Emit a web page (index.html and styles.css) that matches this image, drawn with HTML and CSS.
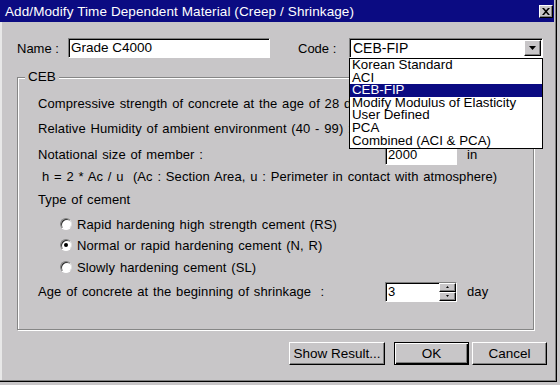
FILE: index.html
```html
<!DOCTYPE html>
<html>
<head>
<meta charset="utf-8">
<link rel="stylesheet" href="styles.css">
</head>
<body>
<div class="window">
  <div class="titlebar">
    <span class="title">Add/Modify Time Dependent Material (Creep / Shrinkage)</span>
    <span class="close"><svg width="8" height="7" viewBox="0 0 8 7"><path d="M0 0h2l2 2.2L6 0h2L5 3.5 8 7H6L4 4.8 2 7H0l3-3.5z" fill="#000"/></svg></span>
  </div>

  <div class="toprow">
    <span class="lbl-name">Name :</span>
    <span class="field name-field">Grade C4000</span>
    <span class="lbl-code">Code :</span>
    <div class="combo">
      <span class="combo-text">CEB-FIP</span>
      <span class="combo-btn"><svg width="7" height="4" viewBox="0 0 7 4"><path d="M0 0h7L3.5 4z" fill="#000"/></svg></span>
      <ul class="droplist">
        <li>Korean Standard</li>
        <li>ACI</li>
        <li class="sel">CEB-FIP</li>
        <li>Modify Modulus of Elasticity</li>
        <li>User Defined</li>
        <li>PCA</li>
        <li>Combined (ACI &amp; PCA)</li>
      </ul>
    </div>
  </div>

  <div class="group">
    <div class="legend">CEB</div>
    <div class="rows">
      <div class="row r1">
        <span class="rlabel">Compressive strength of concrete at the age of 28 days :</span>
        <span class="field num"></span>
      </div>
      <div class="row r2">
        <span class="rlabel">Relative Humidity of ambient environment (40 - 99) :</span>
        <span class="field num"></span>
      </div>
      <div class="row r3">
        <span class="rlabel">Notational size of member :</span>
        <span class="field num">2000</span><span class="unit">in</span>
      </div>
      <div class="row r4 formula">h = 2 * Ac / u&nbsp;&nbsp;(Ac : Section Area, u : Perimeter in contact with atmosphere)</div>
      <div class="row r5">Type of cement</div>
      <div class="row r6 radio-row"><span class="radio"></span><span>Rapid hardening high strength cement (RS)</span></div>
      <div class="row r7 radio-row"><span class="radio"><span class="dot"></span></span><span>Normal or rapid hardening cement (N, R)</span></div>
      <div class="row r8 radio-row"><span class="radio"></span><span>Slowly hardening cement (SL)</span></div>
      <div class="row r9">
        <span class="rlabel">Age of concrete at the beginning of shrinkage&nbsp; :</span>
        <span class="field num spin-field"><span class="spin-text">3</span>
          <span class="spin">
            <span class="spin-btn"><svg width="3" height="2" viewBox="0 0 3 2"><path d="M1.5 0L3 2H0z" fill="#000"/></svg></span>
            <span class="spin-btn"><svg width="3" height="2" viewBox="0 0 3 2"><path d="M0 0h3L1.5 2z" fill="#000"/></svg></span>
          </span>
        </span><span class="unit">day</span>
      </div>
    </div>
  </div>

  <div class="buttons">
    <span class="btn btn-show">Show Result...</span>
    <span class="btn btn-ok">OK</span>
    <span class="btn btn-cancel">Cancel</span>
  </div>
</div>
</body>
</html>
```

FILE: styles.css
```css
html, body {
  margin: 0;
  padding: 0;
  background: #c8c6c8;
}
body {
  width: 560px;
  height: 385px;
  overflow: hidden;
  font-family: "Liberation Sans", Arial, sans-serif;
  font-size: 13px;
  color: #000;
}
.window {
  width: 557px;
  height: 382px;
  box-sizing: border-box;
  background: #c8c6c8;
  box-shadow: inset -1px -1px 0 #000, inset -2px -2px 0 #808080, inset 2px 0 0 #e8e8e8;
  display: flex;
  flex-direction: column;
}
.titlebar {
  height: 22px;
  margin-right: 3px;
  background: #0b0b82;
  color: #fff;
  display: flex;
  align-items: center;
  justify-content: space-between;
}
.title {
  padding-left: 5px;
  font-size: 13.5px;
  letter-spacing: 0.1px;
}
.close {
  width: 14px;
  height: 13px;
  margin-right: 1px;
  background: #c8c6c8;
  box-sizing: border-box;
  border: 1px solid;
  border-color: #fff #000 #000 #fff;
  box-shadow: inset -1px -1px 0 #808080;
  display: flex;
  align-items: center;
  justify-content: center;
}
.toprow {
  margin-top: 16px;
  height: 20px;
  display: flex;
  align-items: center;
}
.lbl-name {
  margin-left: 17px;
  width: 51px;
}
.lbl-code {
  margin-left: 28px;
  width: 51px;
}
.field {
  box-sizing: border-box;
  height: 20px;
  background: #fff;
  border: 1px solid;
  border-color: #808080 #fff #fff #808080;
  box-shadow: inset 1px 1px 0 #000;
  display: flex;
  align-items: center;
  padding-left: 2px;
  line-height: 1;
}
.name-field {
  width: 202px;
  font-size: 13.5px;
}
.combo {
  position: relative;
  box-sizing: border-box;
  width: 194px;
  height: 20px;
  background: #fff;
  border: 1px solid;
  border-color: #808080 #fff #fff #808080;
  box-shadow: inset 1px 1px 0 #000;
  display: flex;
  align-items: center;
  justify-content: space-between;
}
.combo-text {
  padding-left: 3px;
  font-size: 14px;
}
.combo-btn {
  width: 17px;
  height: 16px;
  margin-right: 1px;
  box-sizing: border-box;
  background: #c8c6c8;
  border: 1px solid;
  border-color: #fff #000 #000 #fff;
  box-shadow: inset -1px -1px 0 #808080;
  display: flex;
  align-items: center;
  justify-content: center;
}
.droplist {
  position: absolute;
  top: 19px;
  left: -1px;
  width: 194px;
  box-sizing: border-box;
  margin: 0;
  padding: 0 0 1px 0;
  list-style: none;
  background: #fff;
  border: 1px solid #000;
  font-size: 13.3px;
  z-index: 5;
}
.droplist li {
  height: 12.6px;
  line-height: 12.6px;
  padding-left: 2px;
  white-space: nowrap;
}
.droplist li.sel {
  background: #0b0b82;
  color: #fff;
}
.group {
  margin-top: 19px;
  margin-left: 17px;
  width: 517px;
  height: 253px;
  box-sizing: border-box;
  border: 1px solid #868686;
  box-shadow: 1px 1px 0 #fff, inset 1px 1px 0 #fff;
}
.legend {
  margin-top: -8px;
  margin-left: 7px;
  width: fit-content;
  padding: 0 3px;
  height: 14px;
  line-height: 14px;
  background: #c8c6c8;
  font-size: 13.5px;
}
.rows {
  padding-top: 7px;
  padding-left: 20px;
  display: flex;
  flex-direction: column;
  letter-spacing: 0.1px;
  word-spacing: 1px;
}
.row {
  display: flex;
  align-items: center;
  white-space: nowrap;
}
.rlabel {
  width: 347px;
  flex: none;
}
.num {
  width: 72px;
}
.unit {
  margin-left: 10px;
}
.r1 { height: 25px; }
.r2 { height: 25px; }
.r3 { height: 27px; }
.r4 { height: 17px; }
.r5 { height: 29px; }
.r6 { height: 20px; }
.r7 { height: 22px; }
.r8 { height: 22px; }
.r9 { height: 27px; }
.formula {
  padding-left: 4px;
}
.radio-row {
  padding-left: 22px;
}
.radio {
  width: 12px;
  height: 12px;
  box-sizing: border-box;
  border-radius: 50%;
  border: 1px solid;
  border-color: #808080 #e0e0e0 #fff #808080;
  background: #fff;
  box-shadow: inset 1px 1px 0 #303030;
  margin-right: 5px;
  display: flex;
  align-items: center;
  justify-content: center;
}
.dot {
  width: 4px;
  height: 4px;
  border-radius: 50%;
  background: #000;
}
.spin-field {
  justify-content: space-between;
  padding-right: 0;
}
.spin {
  display: flex;
  flex-direction: column;
  height: 18px;
  width: 17px;
}
.spin-btn {
  flex: 1;
  box-sizing: border-box;
  background: #c8c6c8;
  border: 1px solid;
  border-color: #fff #000 #000 #fff;
  box-shadow: inset -1px -1px 0 #808080;
  display: flex;
  align-items: center;
  justify-content: center;
}
.buttons {
  margin-top: 12px;
  display: flex;
  justify-content: flex-end;
  padding-right: 10px;
}
.btn {
  height: 23px;
  box-sizing: border-box;
  background: #c8c6c8;
  border: 1px solid;
  border-color: #fff #000 #000 #fff;
  box-shadow: inset -1px -1px 0 #808080;
  display: flex;
  align-items: center;
  justify-content: center;
  font-size: 13.5px;
}
.btn-show { width: 96px; }
.btn-ok {
  width: 75px;
  margin-left: 9px;
  border: 1px solid #000;
  box-shadow: inset 1px 1px 0 #fff, inset -1px -1px 0 #000, inset -2px -2px 0 #808080;
}
.btn-cancel {
  width: 75px;
  margin-left: 3px;
}
```
